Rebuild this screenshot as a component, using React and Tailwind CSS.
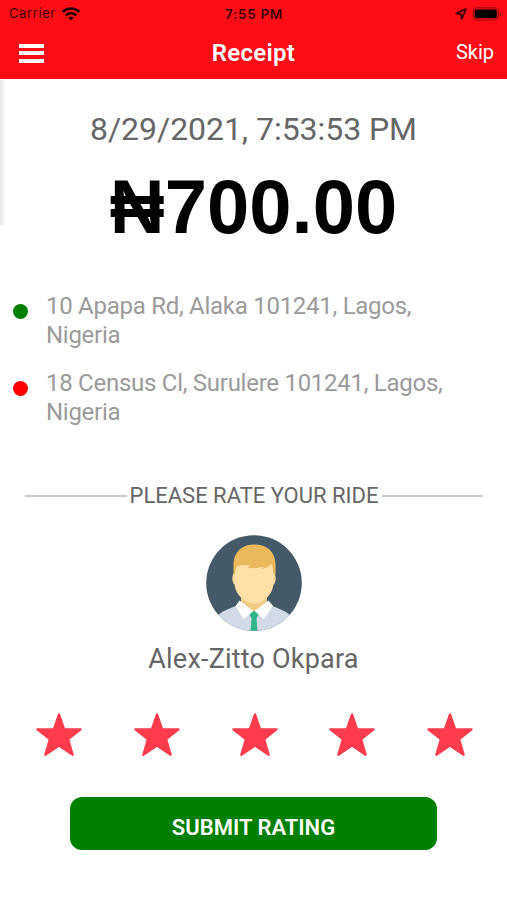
import { useState } from 'react'

const STOPS = [
  { id: 'pickup', dot: 'bg-[#008000]', lines: ['10 Apapa Rd, Alaka 101241, Lagos,', 'Nigeria'] },
  { id: 'dropoff', dot: 'bg-[#ff0000]', lines: ['18 Census Cl, Surulere 101241, Lagos,', 'Nigeria'] },
]

function WifiIcon() {
  return (
    <svg width="18" height="14" viewBox="0 0 18 14" fill="none" stroke="#1c0002" strokeWidth="2.5">
      <path d="M.7 4.9C5.3.4 12.7.4 17.3 4.9" />
      <path d="M3.8 8.2c3-2.7 7.4-2.7 10.4 0" />
      <path d="M9 13.6 6.2 10.8c1.6-1.5 4-1.5 5.6 0z" fill="#1c0002" stroke="none" />
    </svg>
  )
}

function LocationIcon() {
  return (
    <svg width="12" height="12" viewBox="0 0 12 12" fill="none" stroke="#3a0004" strokeWidth="1.7" strokeLinejoin="round">
      <path d="M10.9 1.1 1.2 5.3l4.8.8.7 4.7z" />
    </svg>
  )
}

function BatteryIcon() {
  return (
    <svg width="30" height="14" viewBox="0 0 30 14">
      <rect x="1" y=".8" width="25.4" height="12.2" rx="3.6" fill="none" stroke="#9d060d" strokeWidth="1.2" />
      <rect x="2.6" y="2.5" width="22.2" height="8.8" rx="2" fill="#000" />
      <path d="M28 5c1.6.6 1.6 3.2 0 3.8z" fill="#9d060d" />
    </svg>
  )
}

function Avatar() {
  return (
    <svg width="96" height="96" viewBox="0 0 96 96">
      <defs>
        <clipPath id="avatar-circle">
          <circle cx="48" cy="48" r="47.8" />
        </clipPath>
      </defs>
      <g clipPath="url(#avatar-circle)">
        <rect width="96" height="96" fill="#455a69" />
        {/* Shirt */}
        <path d="M11 96V82c1.5-4 8-7 24-13h26c16 6 22.5 9 24 13v14z" fill="#d2dae7" />
        {/* Neck */}
        <path d="M35 56h26v12L48 78 35 68z" fill="#f1cb85" />
        {/* Collar */}
        <path d="M33.5 65.5 48 76.500 62.500 65.500 67 71 58 84 48 76.500 37.500 84 29.500 71z" fill="#fff" />
        {/* Tie */}
        <path d="M48 75.500 52.500 79.500 50.500 83.500 51.500 96H44.500l1-12.500-2-4z" fill="#30b488" />
        {/* Ears and face */}
        <ellipse cx="29.500" cy="43.500" rx="3.200" ry="6.500" fill="#fad899" />
        <ellipse cx="66.500" cy="43.500" rx="3.200" ry="6.500" fill="#fad899" />
        <path d="M28.500 28h39v18c0 8-2.500 12.500-6.500 16.500-4 4-8 6-13 6s-9-2-13-6c-4-4-6.500-8.500-6.500-16.500z" fill="#ffe1a8" />
        {/* Hair */}
        <path d="M27.500 39.500V29.500C27.500 17 36 9.500 48.500 9.500S69.500 17 69.500 29.500v10h-1.500c-.3-4-1.500-7.500-3-10.500-2 2.500-5 4-9.500 5l3.500-3c-5 2-10 2.500-17.500 2l3-2.500c-5-.8-10-1-13 .8-1.500 1.500-2.200 4.500-2.500 8.200z" fill="#eab95c" />
      </g>
    </svg>
  )
}

function StarIcon({ filled }) {
  const color = filled ? '#ff3b4e' : '#d5d5d5'
  return (
    <svg width="46" height="44" viewBox="0 0 46 44">
      <path
        d="M23 1.400 28.200 16.300 44.600 16.300 32.200 26.200 36.700 41.800 23 32.600 9.300 41.800 13.800 26.200 1.400 16.300 17.800 16.300z"
        fill={color}
        stroke={color}
        strokeWidth="2.200"
        strokeLinejoin="round"
      />
    </svg>
  )
}

function Header() {
  return (
    <header className="h-[79px] bg-[#ff0d16]">
      <div className="grid h-7 grid-cols-3 items-center pl-[9px] pr-[5px] font-['Inter',sans-serif] text-[13px] text-[#3a0004]">
        <div className="flex items-center gap-[6px]">
          <span className="tracking-[0.6px]">Carrier</span>
          <WifiIcon />
        </div>
        <span className="-ml-[3px] text-center text-[13.5px] font-semibold tracking-[0.7px]">7:55 PM</span>
        <div className="flex items-center justify-end gap-[5px]">
          <LocationIcon />
          <BatteryIcon />
        </div>
      </div>
      <div className="grid h-[50px] grid-cols-3 items-center pl-[19px] pr-[13px] text-white">
        <button type="button" aria-label="Menu" className="flex w-[25px] flex-col gap-[3.5px]">
          <span className="h-1 bg-white" />
          <span className="h-1 bg-white" />
          <span className="h-1 bg-white" />
        </button>
        <h1 className="-ml-[6px] text-center text-[24px] font-semibold tracking-[0.3px]">Receipt</h1>
        <button type="button" className="-mt-[2px] justify-self-end text-[20px]">Skip</button>
      </div>
    </header>
  )
}

export default function App() {
  const [rating, setRating] = useState(5)

  return (
    <div className="relative h-[900px] w-[507px] overflow-hidden bg-white font-['Roboto',sans-serif]">
      <Header />
      {/* Edge shadow of the closed drawer */}
      <div className="absolute left-0 top-[80px] h-[145px] w-[6px] bg-gradient-to-r from-[#e6e6e6] to-white" />

      <main className="flex flex-col">
        <p className="mt-[30px] text-center text-[32px] leading-10 tracking-[-0.05px] text-[#666]">8/29/2021, 7:53:53 PM</p>
        <p className="mt-[18px] text-center font-['Liberation_Sans',sans-serif] text-[76px] font-bold leading-[80px] text-black">
          ₦700.00
        </p>

        <ul className="mt-[45px] flex flex-col gap-[19px] pl-[13px]">
          {STOPS.map((stop) => (
            <li key={stop.id} className="flex gap-[18px]">
              <span className={`mt-[12px] size-[15px] shrink-0 rounded-full ${stop.dot}`} />
              <p className="text-[24px] leading-[29px] tracking-[-0.27px] text-[#9b9b9b]">
                {stop.lines[0]}
                <br />
                {stop.lines[1]}
              </p>
            </li>
          ))}
        </ul>

        <div className="mt-[54px] flex items-center gap-[3px] pl-[25px] pr-[24px]">
          <span className="h-[2px] flex-1 bg-[#c8c8c8]" />
          <span className="text-[22px] leading-[30px] text-[#666]">PLEASE RATE YOUR RIDE</span>
          <span className="h-[2px] flex-1 bg-[#c8c8c8]" />
        </div>

        <div className="mt-[24px] flex flex-col items-center">
          <Avatar />
          <p className="mt-[12px] text-[27px] leading-8 tracking-[0.2px] text-[#666]">Alex-Zitto Okpara</p>
        </div>

        <div className="mt-[38px] flex justify-between pl-[36px] pr-[34px]">
          {[1, 2, 3, 4, 5].map((n) => (
            <button key={n} type="button" aria-label={`${n} stars`} onClick={() => setRating(n)}>
              <StarIcon filled={n <= rating} />
            </button>
          ))}
        </div>

        <button
          type="button"
          className="mx-auto mt-[40px] h-[53px] w-[367px] rounded-xl bg-[#008000] pt-[7px] text-[22px] font-semibold text-white"
        >
          SUBMIT RATING
        </button>
      </main>
    </div>
  )
}
